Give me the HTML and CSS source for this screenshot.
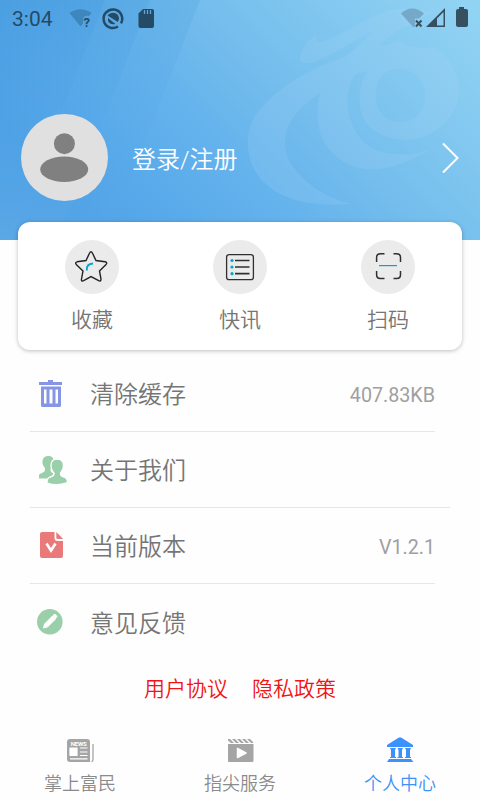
FILE: index.html
```html
<!DOCTYPE html>
<html lang="zh-CN">
<head>
<meta charset="utf-8">
<meta name="viewport" content="width=device-width, initial-scale=1">
<title>个人中心</title>
<link rel="stylesheet" href="styles.css">
</head>
<body>
<header class="hero">
  <svg class="hero-art" viewBox="0 0 480 240" aria-hidden="true">
    <defs>
      <linearGradient id="sky" gradientUnits="userSpaceOnUse" x1="110" y1="230" x2="400" y2="-60">
        <stop offset="0" stop-color="#51a4e8"/><stop offset=".34" stop-color="#65b3ed"/><stop offset=".5" stop-color="#71bbec"/><stop offset="1" stop-color="#91d3f3"/>
      </linearGradient>
      <linearGradient id="band" x1="0" y1="0" x2="0" y2="1">
        <stop offset="0" stop-color="#2c87d0" stop-opacity=".14"/><stop offset=".5" stop-color="#3c93da" stop-opacity=".05"/><stop offset="1" stop-color="#78b2e4" stop-opacity=".1"/>
      </linearGradient>
    </defs>
    <path fill="url(#sky)" d="M0 0H480V240H0z"/>
    <path fill="url(#band)" d="M0 0H200L107 240H0z"/>
    <path fill="url(#band)" d="M0 0H150L57 240H0z"/>
    <path fill="url(#band)" d="M0 0H105L12 240H0z"/>
    <g fill="#b4dcf8" fill-opacity=".16">
      <path d="M316 35C309 39 299 51 300 59C301 65 310 64 317 61C334 54 352 42 373 31C363 41 354 52 342 58C308 69 273 90 255 116C246 130 246 151 252 165C265 194 298 208 351 204C324 197 300 181 289 160C280 140 285 116 320 93C315 114 317 135 329 149C351 177 391 175 431 149C403 159 376 155 362 140C343 119 345 87 356 74L367 71C355 94 358 118 372 129C391 143 417 144 436 130C451 121 459 106 459 88C458 69 445 53 433 47C422 50 413 44 408 47C403 41 396 37 391 44L379 46C390 38 394 30 408 26C421 20 429 13 435 13C409 6 392 7 370 18C350 28 329 42 318 42zM397 69C416 69 426 82 425 98C424 113 413 122 399 122C384 122 375 110 376 93C377 80 384 69 397 69z" fill-rule="evenodd"/>
    </g>
  </svg>
  <div class="status">
    <span class="time">3:04</span>
    <svg class="status-left" width="90" height="24" viewBox="0 0 90 24" aria-hidden="true">
      <path d="M1.500 7Q12.500-.5 23.500 7L21 10Q16 9 15 13V17.500L12.500 20.500z" fill="#3d87bd"/>
      <text x="15.500" y="20.500" class="wifi-mark">?</text>
      <path d="M50 20.500A9.300 9.300 0 1 1 53 17.300" fill="none" stroke="#254a65" stroke-width="2.500"/>
      <path d="M39.500 9.500C43 5.500 48 6 50.500 10Q52 13 49.800 16zM40 12L47.500 18Q42 19 40 15z" fill="#254a65"/>
      <path d="M75 3H84Q86 3 86 5V20Q86 22 84 22H72.500Q70.500 22 70.500 20V7.500z" fill="#254a65"/>
      <path d="M76.500 4V8M79.500 4V8M82.500 4V8" stroke="#69a5d2" stroke-width="1.300"/>
    </svg>
    <svg class="status-right" width="70" height="24" viewBox="0 0 70 24" aria-hidden="true">
      <path d="M1 6.500Q12-3.500 24 6.500L19 11.500H15V20H13z" fill="#76a9c9"/>
      <path d="M16 13.500L21.500 19.500M21.500 13.500L16 19.500" stroke="#36505f" stroke-width="2"/>
      <path d="M26 20L45 1V20zM37 11.500V18.500H43.500V5z" fill="#36505f" fill-rule="evenodd"/>
      <path d="M59 0H64V2H66Q68 2 68 4V18Q68 20 66 20H58Q56 20 56 18V4Q56 2 58 2H59z" fill="#36505f"/>
    </svg>
  </div>
  <div class="profile">
    <svg class="avatar" viewBox="0 0 87 87" aria-hidden="true"><circle cx="43.500" cy="43.500" r="43.500" fill="#e0e0e0"/><circle cx="43.400" cy="29.700" r="10.500" fill="#808080"/><ellipse cx="43.200" cy="55.300" rx="24" ry="12.700" fill="#808080"/></svg>
    <span class="login">登录/注册</span>
    <svg class="chevron" width="18" height="32" viewBox="0 0 18 32" aria-hidden="true"><path d="M1 1.500L15.500 16L1 30.500" fill="none" stroke="#fff" stroke-width="2"/></svg>
  </div>
</header>
<main>
  <section class="card">
    <div class="action">
      <svg width="54" height="54" viewBox="0 0 54 54" aria-hidden="true"><circle cx="27" cy="27" r="27" fill="#ebebeb"/><path d="M24.600 13Q26 10.500 27.400 13L31 20.500L40 21.800Q43 22.500 40.800 24.700L34.500 31L36 39Q36 41.800 33.700 40.700L26 36.600L18.700 40.700Q16 41.800 16.500 39L18 31L11.500 24.700Q9.500 22.500 12 21.800L21 20.500z" fill="none" stroke="#242424" stroke-width="1.400"/><path d="M21.800 30.500Q21 24 28 23.500" fill="none" stroke="#08a2cb" stroke-width="1.900"/></svg>
      <span>收藏</span>
    </div>
    <div class="action">
      <svg width="54" height="54" viewBox="0 0 54 54" aria-hidden="true"><circle cx="27" cy="27" r="27" fill="#ebebeb"/><rect x="13.600" y="14.700" width="26.800" height="25" rx="2.500" fill="none" stroke="#303030" stroke-width="1.300"/><path d="M22 20.500H36.500M22 27H36.500M22 33.700H36.500" stroke="#303030" stroke-width="1.700"/><g fill="#08a2cb"><circle cx="19" cy="20.500" r="1.600"/><circle cx="19" cy="27" r="1.600"/><circle cx="19" cy="33.700" r="1.600"/></g></svg>
      <span>快讯</span>
    </div>
    <div class="action">
      <svg width="54" height="54" viewBox="0 0 54 54" aria-hidden="true"><circle cx="27" cy="27" r="27" fill="#ebebeb"/><path d="M15.600 22V17.500Q15.600 13.700 19.400 13.700H23.500M32.500 13.700H35.700Q39.500 13.700 39.500 17.500V22M39.500 31V34.800Q39.500 38.600 35.700 38.600H32.500M23.500 38.600H19.400Q15.600 38.600 15.600 34.800V31" fill="none" stroke="#303030" stroke-width="1.500"/><path d="M18 25.600H36" stroke="#08a2cb" stroke-width="1.200"/></svg>
      <span>扫码</span>
    </div>
  </section>
  <ul class="menu">
    <li>
      <svg width="30" height="30" viewBox="0 0 30 30" aria-hidden="true"><path d="M4 3H13V1H18V3H27V6H4zM6 7.500H26V26.500Q26 28 24.500 28H7.500Q6 28 6 26.500zM9 10.500V24.500H11.500V10.500zM14.500 10.500V24.500H17.500V10.500zM20.500 10.500V24.500H23V10.500z" fill="#8796e4" fill-rule="evenodd"/></svg>
      <span class="label">清除缓存</span><span class="value">407.83KB</span>
    </li>
    <li class="wide">
      <svg width="30" height="30" viewBox="0 0 30 30" aria-hidden="true"><g fill="#9bcfaa"><path d="M7.500 6Q8 1 13.500 1Q18.500 1 18.500 6Q18.500 12 15.500 14Q15 17 18 18V23.500H4V20Q4 18.800 7 18Q10 17 10 15V13Q7 10 7.500 6z"/><path d="M16 10Q16.500 4.200 22 4.200Q28.500 4.200 28.500 10.500Q28.500 15 25.500 18Q25 21 29 22Q32.500 23 32.500 27.500Q22 31.500 12 28Q12 23 15 22Q19.500 21 19 18Q16 15 16 10z" stroke="#fff" stroke-width="1.300"/></g></svg>
      <span class="label">关于我们</span>
    </li>
    <li>
      <svg width="30" height="30" viewBox="0 0 30 30" aria-hidden="true"><path d="M7 1H19.500V7Q19.500 10 22.500 10H28V25Q28 27 26 27H7Q5 27 5 25V3Q5 1 7 1z" fill="#ea797a"/><path d="M21.300 1L28.200 8H23Q21.300 8 21.300 6.500z" fill="#ea797a"/><path d="M11.500 12.500L16 19.500L20.500 12.500" fill="none" stroke="#fff" stroke-width="2.600"/></svg>
      <span class="label">当前版本</span><span class="value">V1.2.1</span>
    </li>
    <li>
      <svg width="30" height="30" viewBox="0 0 30 30" aria-hidden="true"><circle cx="14.800" cy="14.700" r="12.800" fill="#9bcfaa"/><path d="M8.500 21L9.500 17L17.500 9L20.500 12L12.500 20zM18 8.500L19.200 7.500Q20 7 21 8L21.600 8.700Q22.300 9.600 21.300 10.500L20.500 11.500z" fill="#fff" stroke="#fff" stroke-width="1"/></svg>
      <span class="label">意见反馈</span>
    </li>
  </ul>
  <div class="legal"><span>用户协议</span><span>隐私政策</span></div>
</main>
<nav class="tabs">
  <div class="tab">
    <svg width="32" height="30" viewBox="0 0 32 30" aria-hidden="true"><path d="M6 4H23Q26 4 26 7V27H6Q3 27 3 24V7Q3 4 6 4z" fill="#a5a5a5"/><path d="M29 9V24Q29 26.500 27.500 26.500" fill="none" stroke="#a5a5a5" stroke-width="1.300"/><path d="M6 13H13V20.500H6zM16 13H23.500M16 17H23.500M16 20.500H23.500M6 23.800H23.500" fill="#fff" stroke="#fff" stroke-width="1.200"/><text x="6.800" y="10.700" textLength="16" class="news">NEWS</text></svg>
    <span>掌上富民</span>
  </div>
  <div class="tab">
    <svg width="32" height="30" viewBox="0 0 32 30" aria-hidden="true"><path d="M4 4H6L10 8H7L4 5.500zM8 4H11L15 8H12zM13 4H16L20 8H17zM18 4H21L25 8H22zM23 4H26L29 7V8H27zM4 9H29.500V25.500Q29.500 27 28 27H5Q4 27 4 26z" fill="#a5a5a5"/><path d="M13.500 13.500L22 18L13.500 22.500z" fill="#fff" stroke="#fff" stroke-width="1.500" stroke-linejoin="round"/></svg>
    <span>指尖服务</span>
  </div>
  <div class="tab active">
    <svg width="32" height="30" viewBox="0 0 32 30" aria-hidden="true"><path d="M3 10L14.500 2.800Q16 1.800 17.500 2.800L29 10V12H3zM6 13H12L11 15V22H12V23H6V22H7V15zM13.500 13H19L18 15V22H19V23H13.500V22H14.500V15zM21 13H27L26 15V22H27V23H21V22H22V15zM5 24H27L29.500 27H3z" fill="#3c91fb"/></svg>
    <span>个人中心</span>
  </div>
</nav>
</body>
</html>
```
FILE: styles.css
```css
* { box-sizing: border-box; }
body {
  margin: 0;
  width: 480px;
  height: 800px;
  overflow: hidden;
  background: #fefefe;
  color: #757575;
  font-family: Roboto, "Noto Sans CJK SC DemiLight", "Noto Sans CJK SC", sans-serif;
  font-weight: 350;
}
svg { display: block; flex: none; overflow: visible; }
.hero { position: relative; height: 240px; isolation: isolate; }
.hero-art { position: absolute; inset: 0; z-index: -1; width: 480px; height: 240px; }
.status { display: flex; height: 38px; padding: 0 12px; }
.time { width: 56px; font-size: 21px; font-weight: 400; line-height: 38px; color: #254a65; }
.status-left { margin-top: 6px; }
.status-right { width: 70px; height: 24px; margin: 7px -2px 0 auto; }
.wifi-mark { font: 700 13px Roboto, sans-serif; fill: #254a65; }
.profile { display: flex; align-items: center; height: 87px; margin-top: 76px; padding: 0 20px 0 21px; }
.avatar { width: 87px; height: 87px; }
.login { margin: 4px 0 0 24px; color: #fff; font-size: 24px; line-height: 36px; }
.chevron { margin-left: auto; }
.card {
  position: relative;
  display: grid;
  grid-template-columns: repeat(3, 1fr);
  height: 128px;
  margin: -18px 18px 0;
  padding-top: 18px;
  border-radius: 12px;
  background: #fff;
  box-shadow: 0 1px 4px rgba(0, 0, 0, .25);
}
.action { display: flex; flex-direction: column; align-items: center; gap: 11px; font-size: 21px; line-height: 30px; }
.menu { list-style: none; margin: 6px 0 0; padding: 0 45px 0 30px; }
.menu li { display: flex; align-items: center; height: 76px; padding-left: 5px; border-bottom: 1px solid #e6e6e6; }
.menu li.wide { margin-right: -15px; }
.menu li:last-child { border: 0; }
.label { margin: 3px 0 0 25px; font-size: 24px; line-height: 36px; }
.value { margin: 4px 0 0 auto; font-size: 19.7px; font-weight: 400; color: #a0a0a0; }
.legal { display: flex; justify-content: center; gap: 24px; height: 56px; line-height: 58px; font-size: 21px; color: #f01414; }
.tabs { display: grid; grid-template-columns: repeat(3, 1fr); height: 64px; margin-top: 19px; }
.tab { display: flex; flex-direction: column; align-items: center; font-size: 18px; line-height: 26px; gap: 6px; color: #8b8b8b; }
.tab.active { color: #3c91fb; }
.news { font: 700 6px Roboto, sans-serif; fill: #fff; }
```
